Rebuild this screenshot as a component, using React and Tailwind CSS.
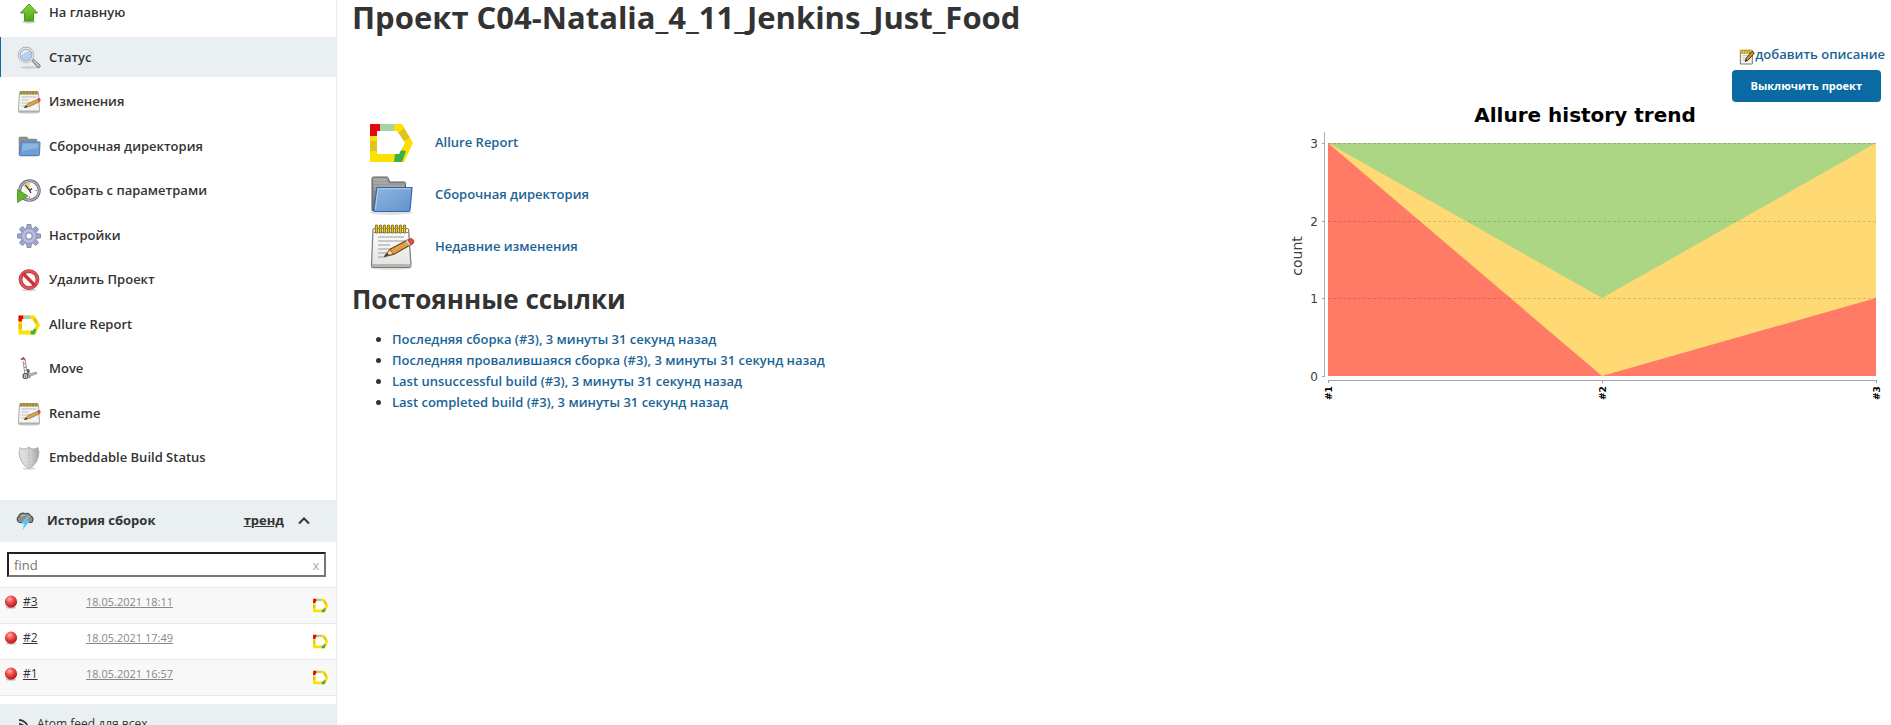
import React from "react";

function Svg({ size = 24, className = "", children }) {
  return (
    <svg width={size} height={size} viewBox="0 0 48 48" aria-hidden="true" className={"shrink-0 " + className}>
      {children}
    </svg>
  );
}

function AllureIcon({ size }) {
  return (
    <Svg size={size}>
      <path fill="#fee000" d="M3 5h32l11 19-9 19H3z" />
      <path fill="#e30613" d="M3 5h10v12H3z" />
      <path fill="#a6d2a4" d="M13 5h14v7H13z" />
      <path fill="#dfc41f" d="M3 22h7v10H3zM31 14l6-5 6 10-6 3z" />
      <path fill="#3fae49" d="M28 35l5-4 6 1-4 11h-8z" />
      <path fill="#ffffff" d="M10 12h20l8 12-6 11H10z" />
    </Svg>
  );
}

function FolderIcon({ size }) {
  return (
    <Svg size={size}>
      <defs>
        <linearGradient id="folderFront" x1="0" y1="0" x2="1" y2="1">
          <stop offset="0" stopColor="#8db4de" />
          <stop offset="0.55" stopColor="#76a3d6" />
          <stop offset="1" stopColor="#5d91cb" />
        </linearGradient>
        <linearGradient id="folderBack" x1="0" y1="0" x2="0" y2="1">
          <stop offset="0" stopColor="#a3a3a3" />
          <stop offset="1" stopColor="#6f6f6f" />
        </linearGradient>
      </defs>
      <ellipse cx="24" cy="41.5" rx="21" ry="2.5" fill="#000" opacity=".12" />
      <path d="M5 39.500V7.500q0-1.500 1.500-1.500h13.500q1 0 1.500 1.500l1 3.500h14.500q1.500 0 1.500 1.500v27z" fill="url(#folderBack)" stroke="#5c5c5c" />
      <path d="M7 9h12M7 12h14M7 15h30M7 18h3" stroke="#bdbdbd" strokeWidth=".8" />
      <path d="M10 16.500h35l-2 22.500q-.2 1.500-1.700 1.500H7.500q-1 0-.8-1.500z" fill="url(#folderFront)" stroke="#3667a8" strokeWidth="1.200" />
      <path d="M11 17.800h32.500M11 18l-2.500 20" stroke="#b9d2ee" strokeWidth=".9" fill="none" />
    </Svg>
  );
}

function SmallFolderIcon() {
  return (
    <Svg>
      <ellipse cx="24" cy="42" rx="21" ry="2.500" fill="#000" opacity=".12" />
      <path d="M4 40V6q0-2 2-2h13q2 0 3 4h16q2 0 2 2v30z" fill="#8d8f92" stroke="#77797c" />
      <path d="M9 14h37l-1 25q0 2-2 2H6q-1 0-1-2z" fill="#6d9fd5" stroke="#4a7dbb" strokeWidth="2" />
      <path d="M11 17h32l-1 9q-18 1-32 7z" fill="#8bb4e0" />
    </Svg>
  );
}

function NotepadIcon({ size, className }) {
  return (
    <Svg size={size} className={className}>
      <defs>
        <linearGradient id="paper" x1="0" y1="0" x2="0" y2="1">
          <stop offset="0" stopColor="#ffffff" />
          <stop offset="1" stopColor="#e2e2e0" />
        </linearGradient>
      </defs>
      <ellipse cx="24" cy="44.800" rx="20" ry="2.200" fill="#000" opacity=".13" />
      <path d="M7.500 5.500h32.500q1.500 0 1.600 1.500l2.400 35q0 2.500-2 2.500H6q-1.500 0-1.500-2.500L6 7q0-1.500 1.500-1.500z" fill="url(#paper)" stroke="#7b7b78" strokeWidth="1.200" />
      <path d="M5 41h38.500v3H5z" fill="#b5b5b2" />
      <path d="M11 14h26M11 18h28M11 22h12M11 26h24M11 30h10M11 34h8" stroke="#9c9c9a" strokeWidth="1.200" />
      <path d="M7 9.500h34" stroke="#8d8a70" strokeWidth="1" />
      <path d="M9.500 3v6M13.500 3v6M17.500 3v6M21.500 3v6M25.500 3v6M29.500 3v6M33.500 3v6M37.500 3v6" stroke="#6d5d0c" strokeWidth="3.200" strokeLinecap="round" />
      <path d="M9.500 3v6M13.500 3v6M17.500 3v6M21.500 3v6M25.500 3v6M29.500 3v6M33.500 3v6M37.500 3v6" stroke="#e0c32c" strokeWidth="1.700" strokeLinecap="round" />
      <path d="M17.500 33.500l6-7.500 17-9 3.500 4.500-17.500 10z" fill="#dda04a" stroke="#6d4611" strokeWidth="1.200" strokeLinejoin="round" />
      <path d="M17.500 33.500l5.500-7 3 4.500z" fill="#f1dcae" stroke="#6d4611" strokeWidth=".7" />
      <path d="M17.500 33.500l3-3.200 1.200 1.800z" fill="#222" />
      <path d="M38.500 18l3-1.500 3.300 4.800-3 1.500z" fill="#c9c9c9" />
      <path d="M41 16.700l2-1q2.500-.5 3.500 1.500t-.5 3.500l-2 1.200z" fill="#e24a43" stroke="#a82620" strokeWidth=".7" />
    </Svg>
  );
}

function SmallNotepadIcon() {
  return (
    <Svg>
      <ellipse cx="24" cy="45" rx="22" ry="2.500" fill="#000" opacity=".15" />
      <path d="M5 5h38l2 36q0 3-2 3H5q-2 0-2-3z" fill="#f4f4f2" stroke="#a9a9a6" strokeWidth="2" />
      <path d="M3 41h42v3H3z" fill="#b0b0ad" />
      <path d="M9 14h30M9 20h14M9 26h24M9 32h10" stroke="#bdbdbb" strokeWidth="2" />
      <path d="M6 2h36v7H6z" fill="#b5a052" />
      <path d="M8 2v7M14 2v7M20 2v7M26 2v7M32 2v7M38 2v7" stroke="#857431" strokeWidth="2" />
      <path d="M15 35l7-8 21-9 3 5-21 10z" fill="#dfa552" stroke="#9a6d2c" strokeWidth="1.500" strokeLinejoin="round" />
      <path d="M14 35.500l4-5 3 4z" fill="#333" />
      <path d="M40 18l5-2q3 1 2 5l-4 3z" fill="#d84a3c" />
    </Svg>
  );
}

function EditIcon() {
  return (
    <Svg size={16}>
      <path d="M4 8h36v37H4z" fill="#f5f5f2" stroke="#77776f" strokeWidth="3" />
      <path d="M10 20h18M10 27h14M10 34h10" stroke="#bcbcb8" strokeWidth="2.500" />
      <path d="M4 3h36v10H4z" fill="#e3c944" stroke="#a88d1a" strokeWidth="2" />
      <path d="M10 3v8M17 3v8M24 3v8M31 3v8" stroke="#8c7414" strokeWidth="2" />
      <path d="M19 37l3-10L39 7l7 5-18 21z" fill="#cc9141" stroke="#4f3714" strokeWidth="3" strokeLinejoin="round" />
      <path d="M18 38l2-7 5 4z" fill="#222" />
    </Svg>
  );
}

function UpIcon() {
  return (
    <Svg>
      <defs>
        <linearGradient id="upFill" x1="0" y1="0" x2="0" y2="1">
          <stop offset="0" stopColor="#8fd04a" />
          <stop offset="1" stopColor="#4da80f" />
        </linearGradient>
      </defs>
      <ellipse cx="24" cy="42" rx="14" ry="3" fill="#000" opacity=".18" />
      <path d="M24 6L41 24H33v16H15V24H7z" fill="url(#upFill)" stroke="#4b9a18" strokeWidth="2" strokeLinejoin="round" />
    </Svg>
  );
}

function SearchIcon() {
  return (
    <Svg>
      <ellipse cx="24" cy="43" rx="18" ry="3" fill="#000" opacity=".12" />
      <path d="M29 29l4-3 13 12q2 3-1 5t-4 0z" fill="#a5a5a5" stroke="#7a7a7a" strokeWidth="1.500" />
      <path d="M33 29l11 11" stroke="#dedede" strokeWidth="2" />
      <circle cx="18" cy="18" r="14" fill="#b4d0ef" stroke="#9b9b9b" strokeWidth="5" />
      <circle cx="18" cy="18" r="14" fill="none" stroke="#ececec" strokeWidth="2.500" />
      <path d="M8 19a10 10 0 0 1 17-8q-6 0-10 3t-7 5z" fill="#e3eefa" />
    </Svg>
  );
}

function ClockIcon() {
  return (
    <Svg>
      <circle cx="25" cy="23" r="19.500" fill="#fafaf7" stroke="#73738c" strokeWidth="6" />
      <circle cx="25" cy="23" r="19.500" fill="none" stroke="#b4b4c6" strokeWidth="2.500" />
      <path d="M25 23L13 13q4-6 11-7z" fill="#ecd98b" stroke="#c2a740" />
      <path d="M17 12l8 11M25 23l5-4M25 23l3 5" stroke="#333" strokeWidth="2.500" fill="none" />
      <path d="M40 23h-3M25 38v-3" stroke="#777" strokeWidth="2" />
      <path d="M1 21l21 13L1 47z" fill="#63b52b" stroke="#3d8b14" strokeWidth="1.500" />
    </Svg>
  );
}

function GearIcon() {
  const teeth = [0, 45, 90, 135, 180, 225, 270, 315];
  return (
    <Svg>
      <g fill="#a0a8ca" stroke="#7079a3" strokeWidth="1.500">
        {teeth.map((a) => (
          <path key={a} d="M19 11l1-10h8l1 10z" transform={`rotate(${a} 24 24)`} />
        ))}
      </g>
      <circle cx="24" cy="24" r="16" fill="#a3aacd" stroke="#8188b0" strokeWidth="1" />
      <circle cx="24" cy="24" r="11" fill="none" stroke="#b9c0dc" strokeWidth="4" />
      <circle cx="24" cy="24" r="6" fill="#fff" stroke="#8188ae" strokeWidth="1.500" />
    </Svg>
  );
}

function StopIcon() {
  return (
    <Svg>
      <ellipse cx="24" cy="44" rx="15" ry="2.500" fill="#000" opacity=".15" />
      <circle cx="24" cy="23" r="17" fill="#fdf6f6" stroke="#b5262b" strokeWidth="7.500" />
      <circle cx="24" cy="23" r="17" fill="none" stroke="#d9555a" strokeWidth="5" />
      <path d="M12 11l24 24" stroke="#c93237" strokeWidth="6.500" />
    </Svg>
  );
}

function MoveIcon() {
  return (
    <Svg>
      <path d="M8 5l5-3 3 4" fill="none" stroke="#b9304a" strokeWidth="3" />
      <path d="M12 8l4 28M16 5l5 28" stroke="#9a9a9a" strokeWidth="2" fill="none" />
      <path d="M13 14l5-1M14 21l6-1M15 27l6-1" stroke="#8a8a8a" strokeWidth="2" />
      <path d="M17 36l22-6v4l-20 6z" fill="#bdbdbd" stroke="#777" strokeWidth="1.200" />
      <path d="M20 24l5 1v7l-4 2z" fill="#555" />
      <circle cx="17" cy="38" r="5" fill="#ddd" stroke="#444" strokeWidth="2.200" />
      <circle cx="17" cy="38" r="1.500" fill="#333" />
      <circle cx="25" cy="40" r="2.500" fill="#999" />
    </Svg>
  );
}

function ShieldIcon() {
  return (
    <Svg>
      <defs>
        <linearGradient id="shieldFill" x1="0" y1="0" x2="1" y2="0">
          <stop offset="0" stopColor="#e0e0e0" />
          <stop offset="0.500" stopColor="#d6d6d6" />
          <stop offset="1" stopColor="#a2a2a2" />
        </linearGradient>
      </defs>
      <ellipse cx="24" cy="45" rx="13" ry="2.500" fill="#000" opacity=".15" />
      <path d="M24 2q5 5 10 4t8-3q0 5 2 8-1 25-20 34Q5 36 4 11q2-3 2-8 3 3 8 3t10-4z" fill="url(#shieldFill)" stroke="#a2a2a2" strokeWidth="1.500" />
      <path d="M24 5v37" stroke="#a0a0a0" strokeWidth="2" strokeDasharray="3 3" />
    </Svg>
  );
}

function StormIcon() {
  return (
    <Svg size={18}>
      <path d="M10 28a9 9 0 0 1-3-16 11 11 0 0 1 17-7 10 10 0 0 1 15 6 9 9 0 0 1 1 17z" fill="#8a8d90" stroke="#46494c" strokeWidth="3" />
      <path d="M14 13q4-7 12-4M28 14q5-4 9 0" stroke="#b7babc" strokeWidth="3" fill="none" />
      <path d="M27 17L13 31h9l-4 16 17-22h-9l6-9z" fill="#4cc4ef" stroke="#8fdcf8" strokeWidth="1.500" />
    </Svg>
  );
}

function BallIcon() {
  return (
    <Svg size={14}>
      <defs>
        <radialGradient id="ball" cx="0.400" cy="0.300" r="0.700">
          <stop offset="0" stopColor="#ffb3b3" />
          <stop offset="0.450" stopColor="#ef4b4b" />
          <stop offset="1" stopColor="#b81414" />
        </radialGradient>
      </defs>
      <ellipse cx="24" cy="43" rx="18" ry="4" fill="#000" opacity=".2" />
      <circle cx="24" cy="23" r="21" fill="url(#ball)" />
    </Svg>
  );
}

const tasks = [
  { label: "На главную", icon: <UpIcon /> },
  { label: "Статус", icon: <SearchIcon />, active: true },
  { label: "Изменения", icon: <SmallNotepadIcon /> },
  { label: "Сборочная директория", icon: <SmallFolderIcon /> },
  { label: "Собрать с параметрами", icon: <ClockIcon /> },
  { label: "Настройки", icon: <GearIcon /> },
  { label: "Удалить Проект", icon: <StopIcon /> },
  { label: "Allure Report", icon: <AllureIcon size={24} /> },
  { label: "Move", icon: <MoveIcon /> },
  { label: "Rename", icon: <SmallNotepadIcon /> },
  { label: "Embeddable Build Status", icon: <ShieldIcon /> },
];

const builds = [
  { id: "#3", date: "18.05.2021 18:11" },
  { id: "#2", date: "18.05.2021 17:49" },
  { id: "#1", date: "18.05.2021 16:57" },
];

const reports = [
  { label: "Allure Report", icon: <AllureIcon size={48} /> },
  { label: "Сборочная директория", icon: <FolderIcon size={48} /> },
  { label: "Недавние изменения", icon: <NotepadIcon size={48} /> },
];

const permalinks = [
  "Последняя сборка (#3), 3 минуты 31 секунд назад",
  "Последняя провалившаяся сборка (#3), 3 минуты 31 секунд назад",
  "Last unsuccessful build (#3), 3 минуты 31 секунд назад",
  "Last completed build (#3), 3 минуты 31 секунд назад",
];

function BuildHistory() {
  return (
    <section className="mt-[23px]">
      <header className="flex h-[42px] items-center bg-[#eaeff2] pr-6 pl-4">
        <StormIcon />
        <h2 className="ml-[13px] text-[13px] font-bold">История сборок</h2>
        <a href="#trend" className="ml-auto text-[13px] font-bold underline">тренд</a>
        <button type="button" aria-label="Свернуть" className="ml-3 grid size-4 place-items-center">
          <svg width="14" height="14" viewBox="0 0 14 14" fill="none" stroke="#333" strokeWidth="2" aria-hidden="true">
            <path d="M2 9.500l5-5 5 5" />
          </svg>
        </button>
      </header>
      <div className="flex items-center py-[10px] pr-[10px] pl-[7px]">
        <input
          type="text"
          aria-label="find"
          placeholder="find"
          className="h-[25px] w-full shrink-0 border-2 border-t-[#212121] border-r-[#767676] border-b-[#767676] border-l-[#212121] bg-white px-[5px] text-[13px] placeholder:text-[#757575]"
        />
        <button type="button" aria-label="Очистить" className="-ml-5 w-5 text-center text-[13px] leading-4 text-[#aaa]">x</button>
      </div>
      <table className="w-full border-b border-[#e4e9f0] text-xs">
        <tbody>
          {builds.map((b) => (
            <tr key={b.id} className="h-9 border-t border-[#e4e9f0] odd:bg-[#f8f8f8]">
              <td className="w-[86px] pb-2 pl-1">
                <span className="flex items-center gap-[5px]">
                  <BallIcon />
                  <a href={"#build-" + b.id.slice(1)} className="underline">{b.id}</a>
                </span>
              </td>
              <td className="pb-2">
                <a href={"#build-" + b.id.slice(1)} className="text-[11px] text-[#888] underline">{b.date}</a>
              </td>
              <td className="w-6 pr-[6px]">
                <AllureIcon size={17} />
              </td>
            </tr>
          ))}
        </tbody>
      </table>
      <footer className="mt-2 flex items-center gap-2 bg-[#eaeff2] px-[19px] py-3 text-xs">
        <svg width="10" height="10" viewBox="0 0 10 10" fill="none" stroke="#333" strokeWidth="1.800" aria-hidden="true">
          <path d="M0 1a9 9 0 0 1 9 9M0 4.800a5 5 0 0 1 5.200 5.200" />
          <circle cx="1.500" cy="8.500" r=".8" fill="#333" />
        </svg>
        <a href="#atom">Atom feed для всех</a>
      </footer>
    </section>
  );
}

function TrendChart() {
  const levels = [
    { v: 3, y: 41 },
    { v: 2, y: 119 },
    { v: 1, y: 196 },
    { v: 0, y: 274 },
  ];
  const points = [
    { label: "#1", x: 44 },
    { label: "#2", x: 318 },
    { label: "#3", x: 592 },
  ];
  return (
    <svg width="600" height="300" viewBox="0 0 600 300" role="img" aria-label="Allure history trend" className="mr-px font-['DejaVu_Sans',sans-serif]">
      <text x="301" y="20" textAnchor="middle" fontSize="20" fontWeight="700" fill="#000">Allure history trend</text>
      <path d="M44 41H592V274H44z" fill="#acd683" />
      <path d="M44 41L318 196L592 41V274H44z" fill="#ffd973" />
      <path d="M44 41L318 274L592 196V274H44z" fill="#ff7b65" />
      {levels.map((l) => (
        <g key={l.v}>
          {l.v > 0 && <path d={`M44 ${l.y + 0.5}H592`} stroke="#000" strokeOpacity=".14" strokeDasharray="3 2" />}
          <path d={`M38 ${l.y + 0.5}h3`} stroke="#a0a0a0" />
          <text x="34" y={l.y + 5} textAnchor="end" fontSize="12" fill="#404040">{l.v}</text>
        </g>
      ))}
      <path d="M40.500 30V274.500" stroke="#b0b0b0" />
      <path d="M44 278.500H592.500" stroke="#a8a8a8" />
      {points.map((p) => (
        <g key={p.label}>
          <path d={`M${p.x + 0.5} 278v3`} stroke="#a0a0a0" />
          <text transform={`translate(${p.x + 4} 298) rotate(-90)`} fontSize="9" fontWeight="700" fill="#000">{p.label}</text>
        </g>
      ))}
      <text transform="translate(18 154) rotate(-90)" textAnchor="middle" fontSize="14" fill="#404040">count</text>
    </svg>
  );
}

export default function App() {
  return (
    <div className="flex h-screen overflow-hidden bg-white font-['Open_Sans','Noto_Sans',sans-serif] text-[13px] text-[#333]">
      <aside className="w-[337px] shrink-0 border-r border-[#e8edf1]">
        <nav className="-mt-2 flex h-[485px] flex-col justify-between">
          {tasks.map((t) => (
            <a
              key={t.label}
              href="#task"
              className={
                "flex h-10 items-center gap-2 border-l pt-[2px] pl-4 font-semibold " +
                (t.active ? "border-[#0b6aa2] bg-[#eaeff2]" : "border-transparent")
              }
            >
              {t.icon}
              <span>{t.label}</span>
            </a>
          ))}
        </nav>
        <BuildHistory />
      </aside>

      <main className="min-w-0 flex-1 pr-[6px] pl-[15px]">
        <h1 className="text-[31px] leading-[34px] font-bold whitespace-nowrap">Проект C04-Natalia_4_11_Jenkins_Just_Food</h1>
        <div className="flex items-start justify-between pt-[11px]">
          <div className="pt-[74px]">
            <ul className="flex flex-col gap-1 pl-[15px]">
              {reports.map((r) => (
                <li key={r.label} className="flex items-center gap-5">
                  {r.icon}
                  <a href="#report" className="font-semibold text-[#1a6496]">{r.label}</a>
                </li>
              ))}
            </ul>
            <h2 className="mt-[10px] text-[26px] leading-9 font-bold">Постоянные ссылки</h2>
            <ul className="mt-3 list-disc pl-10 leading-[21px]">
              {permalinks.map((p) => (
                <li key={p}>
                  <a href="#permalink" className="font-semibold text-[#1a6496]">{p}</a>
                </li>
              ))}
            </ul>
          </div>
          <div className="flex flex-col items-end">
            <a href="#description" className="mb-[3px] flex h-[22px] font-semibold text-[#1a6496]">
              <span className="pt-1">
                <EditIcon />
              </span>
              добавить описание
            </a>
            <button type="button" className="mr-1 h-8 rounded bg-[#0b6aa2] px-[19px] text-[11px] font-bold text-white">Выключить проект</button>
            <TrendChart />
          </div>
        </div>
      </main>
    </div>
  );
}
